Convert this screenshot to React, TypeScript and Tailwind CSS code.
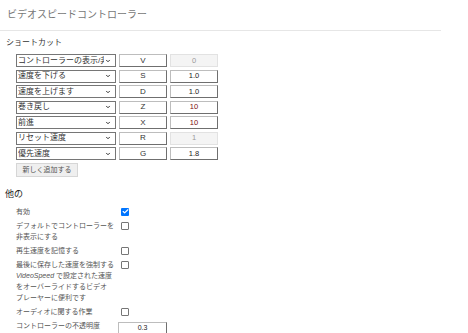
import { ChevronDown, Check } from "lucide-react";

interface Shortcut {
  action: string;
  key: string;
  value: string;
  disabled?: boolean;
  red?: boolean;
}

const SHORTCUTS: Shortcut[] = [
  { action: "コントローラーの表示/非表示", key: "V", value: "0", disabled: true },
  { action: "速度を下げる", key: "S", value: "1.0" },
  { action: "速度を上げます", key: "D", value: "1.0" },
  { action: "巻き戻し", key: "Z", value: "10", red: true },
  { action: "前進", key: "X", value: "10", red: true },
  { action: "リセット速度", key: "R", value: "1", disabled: true },
  { action: "優先速度", key: "G", value: "1.8" },
];

function Box({ checked }: { checked?: boolean }) {
  if (checked) {
    return (
      <div className="w-[8px] h-[8px] rounded-[1px] bg-[#0075ff] flex items-center justify-center text-white">
        <Check className="w-[7px] h-[7px]" strokeWidth={4} />
      </div>
    );
  }
  return <div className="w-[8px] h-[8px] rounded-[1px] border border-[#767676] bg-white" />;
}

function ShortcutRow({ s }: { s: Shortcut }) {
  return (
    <div className="flex items-center gap-[3px] h-[13px]">
      <div className="w-[100px] h-[13px] border border-[#767676] bg-white flex items-center pl-[1px] pr-[4px] text-[8px] text-[#333]">
        <span className="flex-1 overflow-hidden whitespace-nowrap">{s.action}</span>
        <ChevronDown className="w-[6px] h-[6px] shrink-0 ml-[1px]" strokeWidth={4} />
      </div>
      <div className="w-[48px] h-[13px] border border-[#bdbdbd] border-r-[#6f6f6f] border-b-[#6f6f6f] bg-white flex items-center justify-center text-[8px] text-[#333]">
        {s.key}
      </div>
      <div
        className={`w-[48px] h-[13px] border flex items-center justify-center text-[7.5px] ${
          s.disabled
            ? "border-[#e2e2e2] bg-[#f4f4f4] text-[#9a9a9a]"
            : "border-[#bdbdbd] border-r-[#6f6f6f] border-b-[#6f6f6f] bg-white"
        } ${s.red ? "text-[#7a0f0f]" : s.disabled ? "" : "text-[#222]"}`}
      >
        {s.value}
      </div>
    </div>
  );
}

function Option({ children, checked }: { children: React.ReactNode; checked?: boolean }) {
  return (
    <div className="flex items-start">
      <div className="w-[105px] text-[7px] leading-[11px] text-[#555]">{children}</div>
      <div className="h-[11px] flex items-center">
        <Box checked={checked} />
      </div>
    </div>
  );
}

export default function App() {
  return (
    <div className="w-[468px] h-[333px] bg-white overflow-hidden font-['Liberation_Sans','Noto_Sans_CJK_JP',sans-serif]">
      <div className="w-[441px]">
        <h1 className="h-[31px] border-b border-[#e6e6e6] pl-[7px] pt-[8px] text-[10px] leading-[14px] font-normal text-[#777]">
          ビデオスピードコントローラー
        </h1>

        {/* Shortcuts */}
        <h3 className="mt-[6px] pl-[6px] text-[8px] leading-[12px] text-[#333]">ショートカット</h3>
        <div className="mt-[5px] pl-[16px] flex flex-col gap-[2.5px]">
          {SHORTCUTS.map((s) => (
            <ShortcutRow key={s.key} s={s} />
          ))}
        </div>
        <div className="ml-[16px] mt-[3px] w-[62px] h-[14px] border border-[#d6d6d6] bg-[#efefef] flex items-center justify-center text-[7px] text-[#555]">
          新しく追加する
        </div>

        {/* Other */}
        <h3 className="mt-[11px] pl-[5px] text-[9px] leading-[12px] text-[#222]">他の</h3>
        <div className="mt-[6px] pl-[16px] flex flex-col gap-[3px]">
          <Option checked>有効</Option>
          <Option>
            デフォルトでコントローラーを
            <br />
            非表示にする
          </Option>
          <Option>再生速度を記憶する</Option>
          <Option>
            最後に保存した速度を強制する
            <br />
            <i>VideoSpeed</i> で設定された速度
            <br />
            をオーバーライドするビデオ
            <br />
            プレーヤーに便利です
          </Option>
          <Option>オーディオに関する作業</Option>
          <div className="flex items-start">
            <div className="w-[102px] text-[7px] leading-[11px] text-[#555]">コントローラーの不透明度</div>
            <div className="mt-[2px] w-[49px] h-[13px] border border-[#bdbdbd] border-r-[#6f6f6f] border-b-[#6f6f6f] bg-white flex items-center justify-center text-[7px] text-[#222]">
              0.3
            </div>
          </div>
        </div>
      </div>
    </div>
  );
}
